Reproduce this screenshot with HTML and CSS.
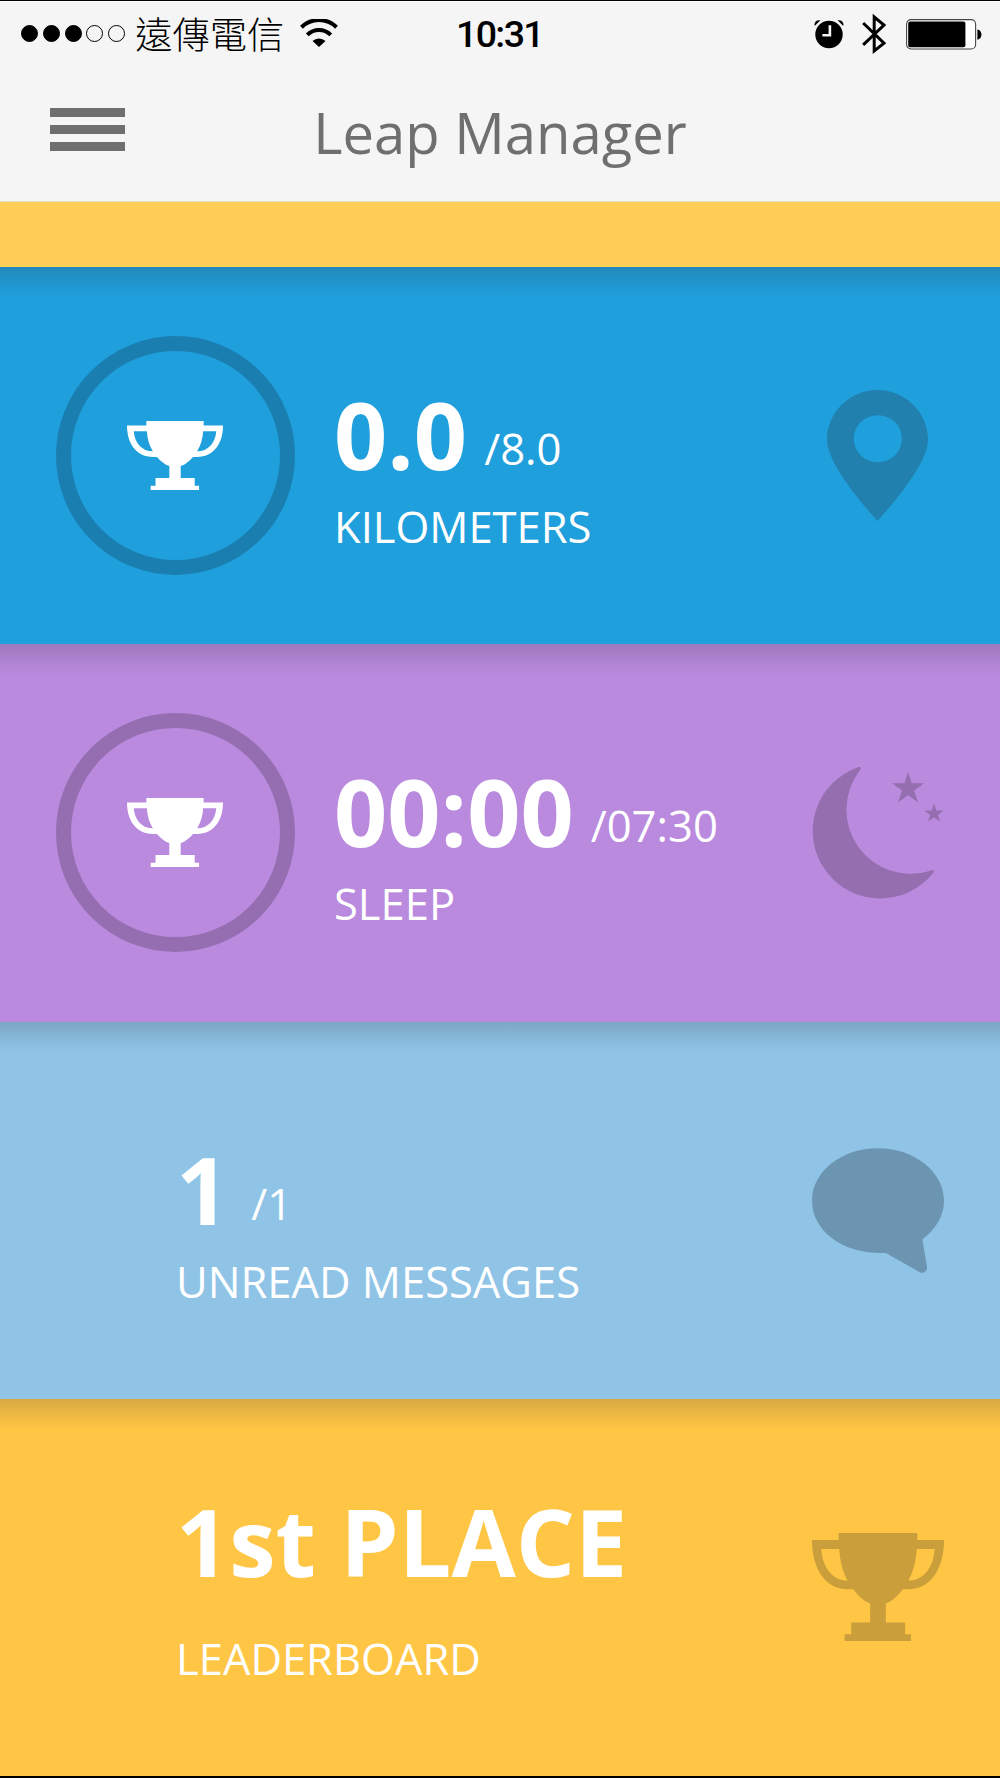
FILE: index.html
```html
<!DOCTYPE html>
<html lang="en">
<head>
    <meta charset="UTF-8">
    <meta name="viewport" content="width=device-width, initial-scale=1.0">
    <title>Leap Manager</title>
    <link rel="stylesheet" href="styles.css">
</head>
<body>
    <!-- Shared icon shapes -->
    <svg class="sprite" width="0" height="0">
        <symbol id="trophy" viewBox="0 0 397 325" preserveAspectRatio="none">
            <path fill-rule="evenodd" d="M80 0H317V21H397C397 110 355 169 290 169H273C258 189 241 205 222 212V269H280V305H298V325H98V305H118V269H175V212C156 205 139 189 124 169H107C42 169 0 110 0 21H80ZM28 48C31 103 62 143 107 143C92 115 84 84 82 48ZM369 48H315C313 84 305 115 290 143C335 143 366 103 369 48Z"/>
        </symbol>
    </svg>

    <div class="screen">
        <div class="status-bar">
            <div class="status-left">
                <div class="signal">
                    <span class="dot full"></span>
                    <span class="dot full"></span>
                    <span class="dot full"></span>
                    <span class="dot"></span>
                    <span class="dot"></span>
                </div>
                <span class="carrier" lang="zh-Hant">遠傳電信</span>
                <svg class="wifi" viewBox="0 0 38 28">
                    <path d="M1.5 8.2A25 25 0 0 1 36.5 8.2" fill="none" stroke="#000" stroke-width="4"/>
                    <path d="M7.3 15.8A16.4 16.4 0 0 1 30.7 15.8" fill="none" stroke="#000" stroke-width="4"/>
                    <path d="M12.5 22A9.5 9.5 0 0 1 25.5 22L19 28Z"/>
                </svg>
            </div>
            <div class="time">10:31</div>
            <div class="status-right">
                <svg class="alarm" viewBox="0 0 30 30">
                    <ellipse cx="15" cy="15.5" rx="13.7" ry="13.7"/>
                    <path d="M0.4 6.3C0.5 2.5 2.5 0.8 6.4 1.2L1.2 6.4ZM29.6 6.3C29.5 2.5 27.5 0.8 23.6 1.2L28.8 6.4Z"/>
                    <path d="M15.9 6.2V16.2H8.4" fill="none" stroke="#f5f5f5" stroke-width="2.6"/>
                </svg>
                <svg class="bluetooth" viewBox="0 0 24 42">
                    <path d="M1.2 10L22 30.2L12.2 38V4L22 12L1.2 31.8" fill="none" stroke="#000" stroke-width="3"/>
                </svg>
                <svg class="battery" viewBox="0 0 76 31">
                    <rect x="0.6" y="0.6" width="69" height="29.4" rx="4.5" fill="#fff" stroke="#444" stroke-width="1.1"/>
                    <rect x="2.2" y="2.4" width="57.2" height="25.8" rx="2"/>
                    <path d="M71.4 10.4C76.8 11 76.8 20.2 71.4 20.8Z"/>
                </svg>
            </div>
        </div>

        <header class="nav-bar">
            <div class="menu">
                <span></span>
                <span></span>
                <span></span>
            </div>
            <h1>Leap Manager</h1>
        </header>

        <div class="strip"></div>

        <main class="cards">
            <section class="card distance">
                <div class="ring"><svg><use href="#trophy"/></svg></div>
                <div class="text">
                    <div class="value">0.0<span class="goal">/8.0</span></div>
                    <div class="label">KILOMETERS</div>
                </div>
                <div class="icon">
                    <svg width="101" height="131" viewBox="0 0 302 395" preserveAspectRatio="none">
                        <path fill-rule="evenodd" d="M151 0C234 0 302 68 302 150C302 210 225 312 151 395C77 312 0 210 0 150C0 68 68 0 151 0ZM152 76A72 71 0 1 0 152 218A72 71 0 1 0 152 76Z"/>
                    </svg>
                </div>
            </section>

            <section class="card sleep">
                <div class="ring"><svg><use href="#trophy"/></svg></div>
                <div class="text">
                    <div class="value">00:00<span class="goal">/07:30</span></div>
                    <div class="label">SLEEP</div>
                </div>
                <div class="icon">
                    <svg width="132" height="133" viewBox="0 0 397 398">
                        <path d="M138 3C145 0 149 5 144 12A193 193 0 0 0 359 313C366 310 369 315 364 321A203 203 0 1 1 138 3Z"/>
                        <path d="M289 17L300 51H337L307 73L319 108L289 87L259 108L271 73L241 51H278Z"/>
                        <path d="M367 112L374 133H396L379 146L385 166L367 154L349 166L355 146L338 133H360Z"/>
                    </svg>
                </div>
            </section>

            <section class="card messages">
                <div class="text">
                    <div class="value">1<span class="goal">/1</span></div>
                    <div class="label">UNREAD MESSAGES</div>
                </div>
                <div class="icon">
                    <svg width="132" height="125" viewBox="0 0 397 375">
                        <path d="M198 0C307 0 397 70 397 158C397 203 372 244 332 274L346 358C347 370 337 378 324 373L222 315C100 322 0 252 0 158C0 70 89 0 198 0Z"/>
                    </svg>
                </div>
            </section>

            <section class="card leaderboard">
                <div class="text">
                    <div class="value">1st PLACE</div>
                    <div class="label">LEADERBOARD</div>
                </div>
                <div class="icon">
                    <svg width="132" height="108"><use href="#trophy"/></svg>
                </div>
            </section>
        </main>
    </div>
</body>
</html>
```
FILE: styles.css
```css
* {
    margin: 0;
    padding: 0;
    box-sizing: border-box;
}

body {
    font-family: 'Open Sans', sans-serif;
    background: #f5f5f5;
}

svg {
    display: block;
}

.sprite {
    display: none;
}

.screen {
    width: 1000px;
    height: 1778px;
    display: flex;
    flex-direction: column;
    overflow: hidden;
    border-top: 1px solid #000;
    border-bottom: 2px solid #000;
}

/* Status bar */
.status-bar {
    height: 64px;
    padding: 0 18px 0 21px;
    display: grid;
    grid-template-columns: 1fr auto 1fr;
    align-items: center;
    border-top: 1px solid #fff;
}

.status-left,
.status-right {
    display: flex;
    align-items: center;
}

.status-left {
    margin-top: -2px;
}

.status-right {
    justify-content: flex-end;
}

.signal {
    display: flex;
    gap: 4.8px;
}

.dot {
    width: 17px;
    height: 17px;
    border: 1px solid #000;
    border-radius: 50%;
}

.dot.full {
    background: #000;
}

.carrier {
    margin-left: 10px;
    font-family: 'Noto Sans CJK TC', sans-serif;
    font-size: 37.3px;
    font-weight: 300;
    line-height: 54px;
}

.wifi {
    width: 38px;
    height: 28px;
    margin-left: 16px;
}

.time {
    padding-right: 4px;
    font-family: Roboto, sans-serif;
    font-size: 37.5px;
    font-weight: 500;
    line-height: 64px;
    letter-spacing: -1.6px;
}

.alarm {
    width: 30px;
    height: 30px;
}

.bluetooth {
    width: 24px;
    height: 42px;
    margin-left: 18px;
}

.battery {
    width: 76px;
    height: 31px;
    margin-left: 20px;
}

/* Title bar */
.nav-bar {
    height: 137px;
    padding: 0 50px;
    display: grid;
    grid-template-columns: 1fr auto 1fr;
    align-items: start;
    border-bottom: 1px solid #e3dcc8;
}

.menu {
    width: 75px;
    margin-top: 43px;
    display: flex;
    flex-direction: column;
    gap: 8px;
}

.menu span {
    height: 9px;
    background: #6f6f6f;
}

h1 {
    margin-top: 27px;
    font-size: 56.2px;
    font-weight: 400;
    line-height: 80px;
    color: #6f6f6f;
}

.strip {
    height: 65px;
    background: #ffce56;
}

/* Cards */
.cards {
    flex: 1;
    display: flex;
    flex-direction: column;
}

.card {
    flex: 1;
    padding: 0 56px;
    display: flex;
    align-items: center;
    background-image: linear-gradient(rgba(50, 50, 50, 0.2), rgba(50, 50, 50, 0.08) 17px, rgba(50, 50, 50, 0) 31px);
    color: #fff;
}

.distance {
    background-color: #1f9fdc;
}

.sleep {
    background-color: #b98ade;
}

.messages {
    background-color: #8fc4e7;
}

.leaderboard {
    background-color: #ffc645;
}

.ring {
    width: 239px;
    height: 239px;
    margin-right: 39px;
    padding-right: 1px;
    display: flex;
    align-items: center;
    justify-content: center;
    border: 15px solid #1a7fb0;
    border-radius: 50%;
}

.ring svg {
    width: 96px;
    height: 69px;
    fill: #fff;
}

.sleep .ring {
    border-color: #946eb1;
}

.text {
    align-self: flex-start;
    padding-top: 122px;
}

.messages .text,
.leaderboard .text {
    margin-left: 120px;
}

.value {
    font-size: 93.2px;
    font-weight: 700;
    line-height: 90px;
    white-space: nowrap;
}

.goal {
    margin-left: 17px;
    font-size: 43.6px;
    font-weight: 400;
    line-height: 44px;
    vertical-align: 5px;
}

.messages .goal {
    margin-left: 22px;
}

.label {
    margin-top: 18px;
    font-size: 43.5px;
    font-weight: 400;
    line-height: 60px;
}

.leaderboard .text {
    padding-top: 97px;
}

.leaderboard .label {
    margin-top: 43px;
}

.icon {
    width: 132px;
    margin-left: auto;
    display: flex;
    justify-content: center;
}

.distance .icon {
    padding-right: 1px;
    fill: #2180ad;
}

.sleep .icon {
    fill: #946eae;
}

.messages .icon {
    fill: #6b95b0;
}

.leaderboard .icon {
    fill: #c99e3b;
}
```
